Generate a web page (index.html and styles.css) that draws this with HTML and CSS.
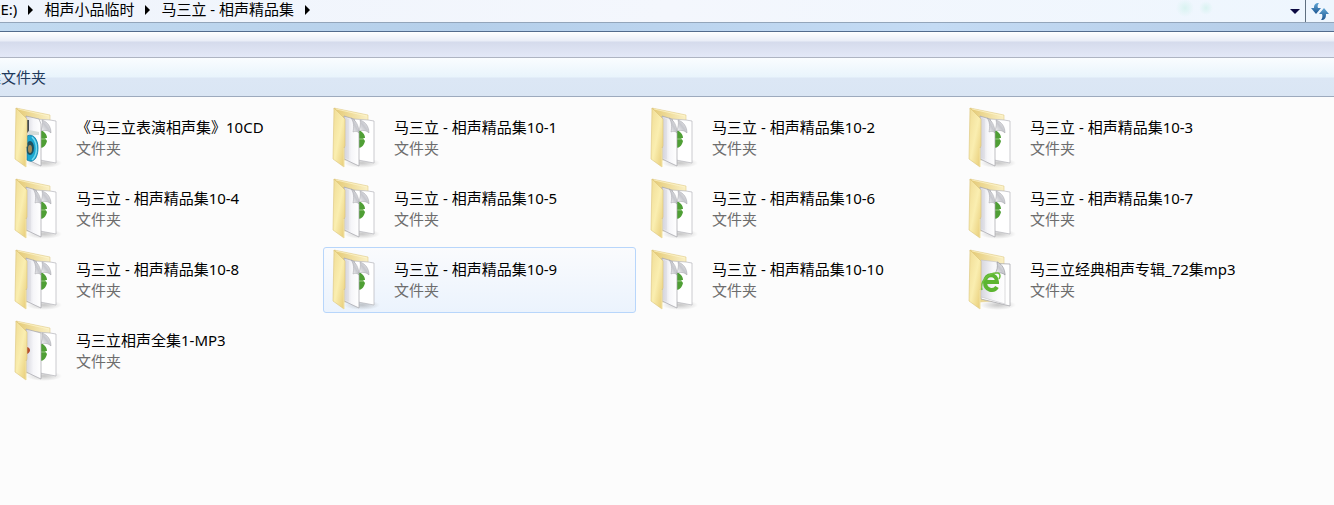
FILE: index.html
```html
<!DOCTYPE html>
<html lang="zh-CN">
<head>
    <meta charset="UTF-8">
    <meta name="viewport" content="width=device-width, initial-scale=1.0">
    <title>马三立 - 相声精品集</title>
    <link rel="stylesheet" href="styles.css">
</head>
<body>
    <svg class="defs" aria-hidden="true">
        <defs>
            <linearGradient id="front" x1="0" y1="0" x2="1" y2="1">
                <stop offset="0" stop-color="#f0dc95"/>
                <stop offset="0.5" stop-color="#faeeb0"/>
                <stop offset="1" stop-color="#e6ca74"/>
            </linearGradient>
            <linearGradient id="back" x1="0" y1="0" x2="1" y2="0">
                <stop offset="0" stop-color="#e4c973"/>
                <stop offset="1" stop-color="#faf0c6"/>
            </linearGradient>
            <linearGradient id="sheet" x1="0" y1="0" x2="1" y2="0">
                <stop offset="0" stop-color="#d6d6de"/>
                <stop offset="0.5" stop-color="#f6f6f9"/>
                <stop offset="1" stop-color="#ffffff"/>
            </linearGradient>
            <linearGradient id="curl" x1="0" y1="1" x2="1" y2="0">
                <stop offset="0" stop-color="#ffffff"/>
                <stop offset="0.5" stop-color="#c6c7cd"/>
                <stop offset="1" stop-color="#f4f4f6"/>
            </linearGradient>
            <radialGradient id="shade">
                <stop offset="0" stop-color="#777" stop-opacity="0.4"/>
                <stop offset="1" stop-color="#777" stop-opacity="0"/>
            </radialGradient>
            <linearGradient id="arrow" x1="0" y1="0" x2="0" y2="1">
                <stop offset="0" stop-color="#5fa6d6"/>
                <stop offset="1" stop-color="#1d5590"/>
            </linearGradient>
        </defs>

        <!-- back wall and shadow -->
        <symbol id="folder-back" viewBox="0 0 56 64">
            <ellipse cx="34" cy="57" rx="18" ry="5" fill="url(#shade)"/>
            <path d="M6 2 L40 9 L40 52 L16 54 Z" fill="url(#back)" stroke="#e0cc8c" stroke-width="0.6"/>
            <path d="M8 3 L39 10" stroke="#fff6cf" stroke-width="0.7"/>
        </symbol>

        <!-- second sheet with the green browser mark -->
        <symbol id="sheet-back" viewBox="0 0 56 64">
            <path d="M26 13 L40 14 L46 15 L46 57 L30 54 Z" fill="#fff" stroke="#b5b5ba" stroke-width="0.7"/>
            <path d="M30 24 C34 25 37 28 37 32 H35 L37 35 C36 39 34 42 30 42 Z" fill="#4f9f35"/>
            <path d="M31 33 H36" stroke="#a9d794" stroke-width="0.8"/>
            <path d="M32 14 C38 16 41 21 41 27 C38 24 34 24 31 25 C32 21 33 17 32 14 Z" fill="url(#curl)" stroke="#a2a3a9" stroke-width="0.5"/>
        </symbol>

        <symbol id="folder-front" viewBox="0 0 56 64">
            <path d="M6 2 L17 13 V40 L16 42 V61 L5 53 Z" fill="url(#front)" stroke="#dcc57a" stroke-width="0.6"/>
            <path d="M16 42 V61" stroke="#fff5c0" stroke-width="0.7"/>
        </symbol>

        <symbol id="folder-docs" viewBox="0 0 56 64">
            <use href="#folder-back"/>
            <use href="#sheet-back"/>
            <path d="M16 10 L26 13 L31 27 L31 60 L16 53 Z" fill="url(#sheet)" stroke="#a4a4aa" stroke-width="0.7"/>
            <path d="M18 12 V52 M20 13 V53" stroke="#c9c9d1" stroke-width="0.5"/>
            <path d="M23 12 C28 14 31 20 31 27 C29 25 27 25 25 26 C26 21 26 16 23 12 Z" fill="url(#curl)" stroke="#a2a3a9" stroke-width="0.5"/>
            <use href="#folder-front"/>
        </symbol>

        <symbol id="folder-disc" viewBox="0 0 56 64">
            <use href="#folder-back"/>
            <use href="#sheet-back"/>
            <path d="M16 10 L29 13 L31 18 L31 60 L16 53 Z" fill="url(#sheet)" stroke="#a4a4aa" stroke-width="0.7"/>
            <path d="M17 14 H19 V25 L17 27 Z" fill="#444c50"/>
            <path d="M19 24 L29 26 V29 L18 29 Z" fill="#d5dcd8"/>
            <path d="M17 30 C23 27 28 33 28 42 C28 51 24 58 17 54 Z" fill="#1ba6cf" stroke="#0c7ba4" stroke-width="0.8"/>
            <path d="M22 31 C28 37 28 48 22 54" fill="none" stroke="#77d9ee" stroke-width="1.5"/>
            <ellipse cx="20" cy="42" rx="4" ry="7" fill="#1f5362"/>
            <ellipse cx="20" cy="43" rx="2" ry="4" fill="#a68b57"/>
            <use href="#folder-front"/>
        </symbol>

        <symbol id="folder-plain" viewBox="0 0 56 64">
            <use href="#folder-back"/>
            <use href="#sheet-back"/>
            <path d="M16 10 L31 14 L31 60 L16 53 Z" fill="url(#sheet)" stroke="#a4a4aa" stroke-width="0.7"/>
            <path d="M17 28 C21 29 21 33 17 35 Z" fill="#b44d2c"/>
            <use href="#folder-front"/>
        </symbol>

        <symbol id="folder-web" viewBox="0 0 56 64">
            <use href="#folder-back"/>
            <path d="M18 15 L46 16 V58 L17 51 Z" fill="#fff" stroke="#9d9da3" stroke-width="0.7"/>
            <path d="M17 12 L34 14 L41 26 L41 56 L17 49 Z" fill="url(#sheet)" stroke="#c3c3c8" stroke-width="0.6"/>
            <path d="M33 14 C34 19 33 23 31 25 C35 24 39 25 41 27 C41 21 38 16 33 14 Z" fill="url(#curl)" stroke="#8d8e94" stroke-width="0.6"/>
            <path d="M21 34 H33 C33 25 21 25 21 34 C21 43 30 44 33 39" fill="none" stroke="#5cb531" stroke-width="4"/>
            <path d="M18 42 C15 34 25 24 34 25 C37 26 36 29 35 31" fill="none" stroke="#6cc03c" stroke-width="1.5"/>
            <use href="#folder-front"/>
        </symbol>
    </svg>

    <header class="address-bar">
        <nav class="crumbs">
            <a class="crumb" href="#">(E:)</a>
            <span class="sep"></span>
            <a class="crumb" href="#">相声小品临时</a>
            <span class="sep"></span>
            <a class="crumb" href="#">马三立 - 相声精品集</a>
            <span class="sep"></span>
        </nav>
        <button class="history" type="button" aria-label="历史记录"></button>
        <button class="refresh" type="button" aria-label="刷新">
            <svg width="18" height="18" viewBox="0 0 18 18">
                <path d="M8 1 C4 1 3 3 3 6 H0 L5 12 L10 6 H7 C6 4 7 2 8 1 Z" fill="url(#arrow)"/>
                <path d="M10 18 C14 18 15 16 15 12 H18 L13 6 L8 12 H11 C12 14 11 17 10 18 Z" fill="url(#arrow)"/>
            </svg>
        </button>
    </header>
    <div class="frame-edge"></div>
    <div class="menu-bar"></div>
    <div class="toolbar">
        <button class="tool" type="button">新建文件夹</button>
    </div>

    <main>
        <ul class="files">
            <li><a class="file" href="#"><svg class="icon"><use href="#folder-disc"/></svg><span class="info"><span class="name">《马三立表演相声集》10CD</span><span class="type">文件夹</span></span></a></li>
            <li><a class="file" href="#"><svg class="icon"><use href="#folder-docs"/></svg><span class="info"><span class="name">马三立 - 相声精品集10-1</span><span class="type">文件夹</span></span></a></li>
            <li><a class="file" href="#"><svg class="icon"><use href="#folder-docs"/></svg><span class="info"><span class="name">马三立 - 相声精品集10-2</span><span class="type">文件夹</span></span></a></li>
            <li><a class="file" href="#"><svg class="icon"><use href="#folder-docs"/></svg><span class="info"><span class="name">马三立 - 相声精品集10-3</span><span class="type">文件夹</span></span></a></li>
            <li><a class="file" href="#"><svg class="icon"><use href="#folder-docs"/></svg><span class="info"><span class="name">马三立 - 相声精品集10-4</span><span class="type">文件夹</span></span></a></li>
            <li><a class="file" href="#"><svg class="icon"><use href="#folder-docs"/></svg><span class="info"><span class="name">马三立 - 相声精品集10-5</span><span class="type">文件夹</span></span></a></li>
            <li><a class="file" href="#"><svg class="icon"><use href="#folder-docs"/></svg><span class="info"><span class="name">马三立 - 相声精品集10-6</span><span class="type">文件夹</span></span></a></li>
            <li><a class="file" href="#"><svg class="icon"><use href="#folder-docs"/></svg><span class="info"><span class="name">马三立 - 相声精品集10-7</span><span class="type">文件夹</span></span></a></li>
            <li><a class="file" href="#"><svg class="icon"><use href="#folder-docs"/></svg><span class="info"><span class="name">马三立 - 相声精品集10-8</span><span class="type">文件夹</span></span></a></li>
            <li><a class="file active" href="#"><svg class="icon"><use href="#folder-docs"/></svg><span class="info"><span class="name">马三立 - 相声精品集10-9</span><span class="type">文件夹</span></span></a></li>
            <li><a class="file" href="#"><svg class="icon"><use href="#folder-docs"/></svg><span class="info"><span class="name">马三立 - 相声精品集10-10</span><span class="type">文件夹</span></span></a></li>
            <li><a class="file" href="#"><svg class="icon"><use href="#folder-web"/></svg><span class="info"><span class="name">马三立经典相声专辑_72集mp3</span><span class="type">文件夹</span></span></a></li>
            <li><a class="file" href="#"><svg class="icon"><use href="#folder-plain"/></svg><span class="info"><span class="name">马三立相声全集1-MP3</span><span class="type">文件夹</span></span></a></li>
        </ul>
    </main>
</body>
</html>
```
FILE: styles.css
```css
* {
    box-sizing: border-box;
}
body {
    margin: 0;
    background-color: #fcfcfc;
    color: #000;
    font-family: "Noto Sans", "Noto Sans CJK SC", sans-serif;
    font-size: 15px;
    line-height: 21px;
    overflow-x: hidden;
}
a {
    color: inherit;
    text-decoration: none;
}
button {
    padding: 0;
    border: none;
    background: none;
    font: inherit;
    color: inherit;
}
.defs {
    position: absolute;
    width: 0;
    height: 0;
}

/* address bar */
.address-bar {
    display: flex;
    height: 23px;
    border-bottom: 1px solid #93a5ba;
    background:
        radial-gradient(circle at 1185px 8px, #d9f3f1, transparent 9px),
        radial-gradient(circle at 1206px 8px, #d9f3f1, transparent 7px),
        linear-gradient(to right, #eff4fc, #f4f7fd 50%, #eef6fe);
}
.crumbs {
    display: flex;
    flex: 1;
    align-items: center;
    gap: 11px;
    margin-left: -4px;
    padding-bottom: 3px;
    white-space: nowrap;
}
.sep {
    border: 5px solid transparent;
    border-left-color: #000;
    border-right-width: 0;
}
.history {
    display: flex;
    align-items: center;
    justify-content: center;
    width: 20px;
}
.history::before {
    content: "";
    border: 5px solid transparent;
    border-top-color: #0c0a42;
    border-bottom-width: 0;
}
.refresh {
    display: flex;
    align-items: center;
    justify-content: center;
    width: 29px;
    border-left: 1px solid #5f6f80;
}
.frame-edge {
    height: 9px;
    border-bottom: 1px solid #536b8c;
    background: linear-gradient(to right, #c2daf0, #b5cfea 35%, #c4dbf4 70%, #b3cbe6);
}
.menu-bar {
    height: 26px;
    border-bottom: 1px solid #aeb4c2;
    background: linear-gradient(#fff, #e9edf7 9px, #d5dbec 10px, #e3e8f7);
}

/* command toolbar */
.toolbar {
    display: flex;
    align-items: center;
    height: 39px;
    border-bottom: 1px solid #9daabd;
    background: linear-gradient(#fafdff, #e9f4fc 19px, #dce7f5 20px, #dae6f4);
}
.tool {
    margin-left: -29px;
    color: #1e395b;
    white-space: nowrap;
}

/* folder tiles */
.files {
    display: grid;
    grid-template-columns: repeat(auto-fill, 313px);
    gap: 5px;
    margin: 0;
    padding: 8px 5px;
    list-style: none;
}
.file {
    display: flex;
    align-items: center;
    gap: 10px;
    height: 66px;
    padding: 0 4px;
    border: 1px solid transparent;
    border-radius: 3px;
}
.file:hover,
.file.active {
    border-color: #b8d6fb;
    background: linear-gradient(#fafbfd, #ebf3fd);
}
.icon {
    flex: none;
    width: 56px;
    height: 64px;
}
.info {
    display: flex;
    flex-direction: column;
    white-space: nowrap;
}
.type {
    color: #6d6d6d;
}
```
